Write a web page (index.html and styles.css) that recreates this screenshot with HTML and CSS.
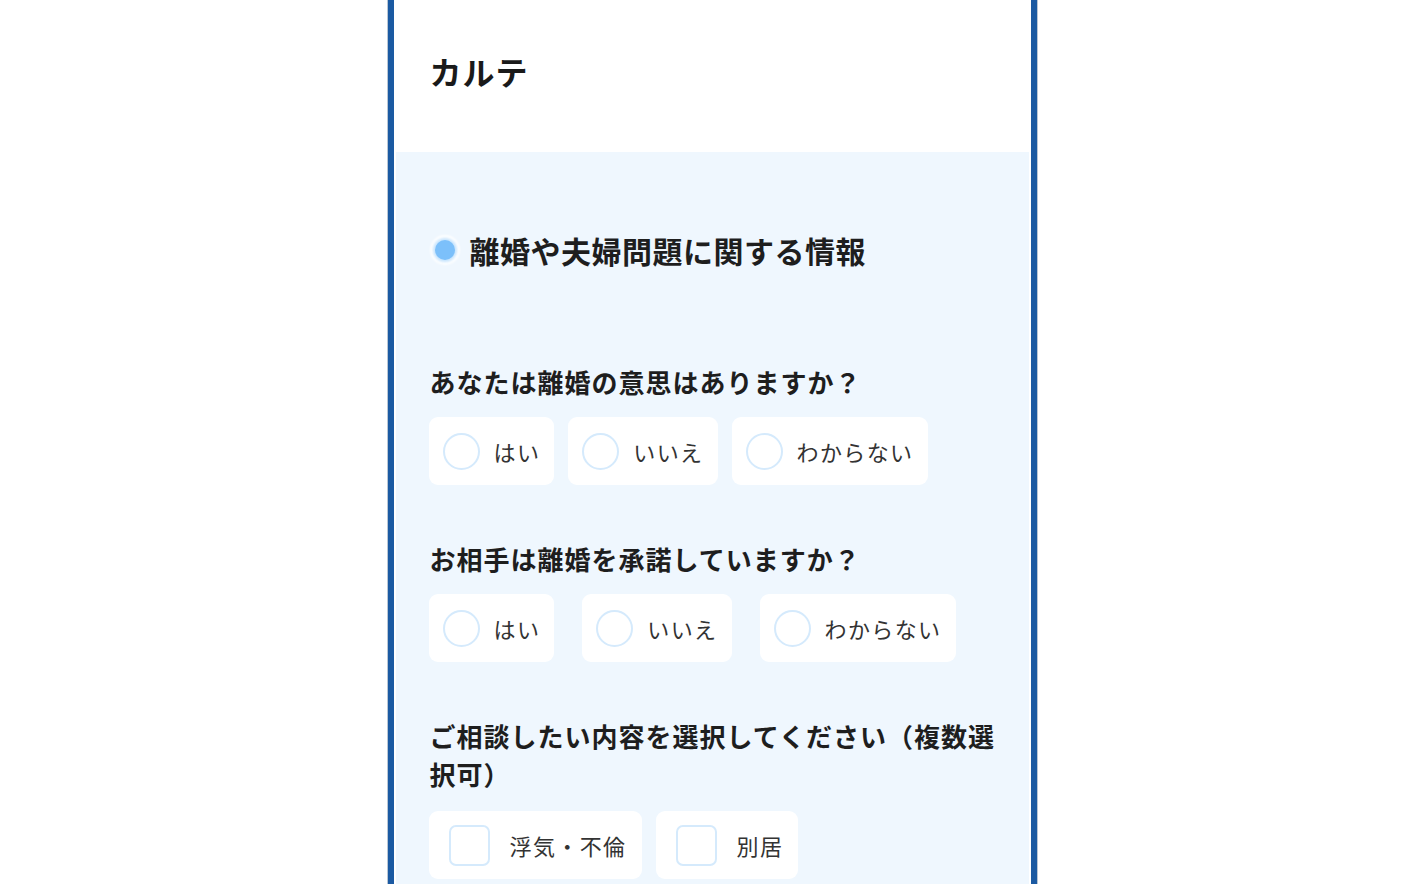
FILE: index.html
```html
<!DOCTYPE html>
<html lang="ja">
<head>
<meta charset="utf-8">
<title>カルテ</title>
<link rel="stylesheet" href="styles.css">
</head>
<body>
<div class="frame">
  <header class="header">
    <h1 class="title">カルテ</h1>
  </header>
  <main class="panel">
    <h2 class="section-title"><span class="dot"></span>離婚や夫婦問題に関する情報</h2>

    <div class="group">
      <p class="question">あなたは離婚の意思はありますか？</p>
      <div class="options">
        <label class="option"><span class="radio"></span><span class="opt-text">はい</span></label>
        <label class="option"><span class="radio"></span><span class="opt-text">いいえ</span></label>
        <label class="option"><span class="radio"></span><span class="opt-text">わからない</span></label>
      </div>
    </div>

    <div class="group">
      <p class="question">お相手は離婚を承諾していますか？</p>
      <div class="options options-wide">
        <label class="option"><span class="radio"></span><span class="opt-text">はい</span></label>
        <label class="option"><span class="radio"></span><span class="opt-text">いいえ</span></label>
        <label class="option"><span class="radio"></span><span class="opt-text">わからない</span></label>
      </div>
    </div>

    <div class="group">
      <p class="question question-wrap">ご相談したい内容を選択してください（複数選択可）</p>
      <div class="options options-checks">
        <label class="option option-check"><span class="check"></span><span class="opt-text">浮気・不倫</span></label>
        <label class="option option-check"><span class="check"></span><span class="opt-text">別居</span></label>
      </div>
    </div>
  </main>
</div>
</body>
</html>
```

FILE: styles.css
```css
* { box-sizing: border-box; }
html, body { margin: 0; padding: 0; }
body {
  background: #ffffff;
  font-family: "Noto Sans CJK JP", "Noto Sans", sans-serif;
  color: #1e1e1e;
  height: 884px;
  overflow: hidden;
}
.frame {
  width: 649px;
  margin: 0 auto;
  min-height: 884px;
  border-left: 6px solid #1b5aa2;
  border-right: 6px solid #1b5aa2;
  box-shadow: -1px 0 0 #b9c6d4, 1px 0 0 #b9c6d4;
  padding: 0 2px;
  background: #ffffff;
}
.header {
  height: 152px;
  display: flex;
  align-items: center;
  padding-left: 34px;
  padding-bottom: 10px;
}
.title {
  margin: 0;
  font-size: 32px;
  font-weight: 700;
  line-height: 1;
  letter-spacing: 1px;
  color: #1a1a1a;
}
.panel {
  background: #eff7fe;
  min-height: 732px;
  padding: 78px 0 0 34px;
}
.section-title {
  margin: 0;
  display: flex;
  align-items: center;
  height: 40px;
  font-size: 30px;
  font-weight: 700;
  letter-spacing: 0.5px;
  color: #1e1e1e;
}
.dot {
  width: 20px;
  height: 20px;
  border-radius: 50%;
  background: #7cc0fa;
  box-shadow: 0 0 3px 2px rgba(124, 192, 250, 0.45), 0 0 2px 5px #ffffff;
  margin: 0 15px 0 5px;
  flex: none;
}
.group { margin-top: 93px; }
.group + .group { margin-top: 55px; }
.question {
  margin: 0;
  font-size: 26px;
  font-weight: 700;
  line-height: 38px;
  letter-spacing: 1px;
  color: #1e1e1e;
}
.question-wrap { width: 580px; }
.options {
  display: flex;
  gap: 14px;
  margin: 16px 0 0 -1px;
}
.options-wide { gap: 28px; }
.options-checks { margin-top: 18px; }
.option {
  height: 68px;
  display: flex;
  align-items: center;
  gap: 14px;
  padding: 0 14px 0 14px;
  background: #ffffff;
  border-radius: 9px;
}
.option-check {
  padding-left: 20px;
  padding-right: 15px;
  gap: 20px;
}
.radio {
  width: 37px;
  height: 37px;
  border-radius: 50%;
  border: 2px solid #d5eafc;
  flex: none;
}
.check {
  width: 41px;
  height: 41px;
  border-radius: 7px;
  border: 2px solid #d5eafc;
  flex: none;
}
.opt-text {
  font-size: 22px;
  font-weight: 400;
  letter-spacing: 1.4px;
  color: #333333;
  line-height: 1;
}
```
